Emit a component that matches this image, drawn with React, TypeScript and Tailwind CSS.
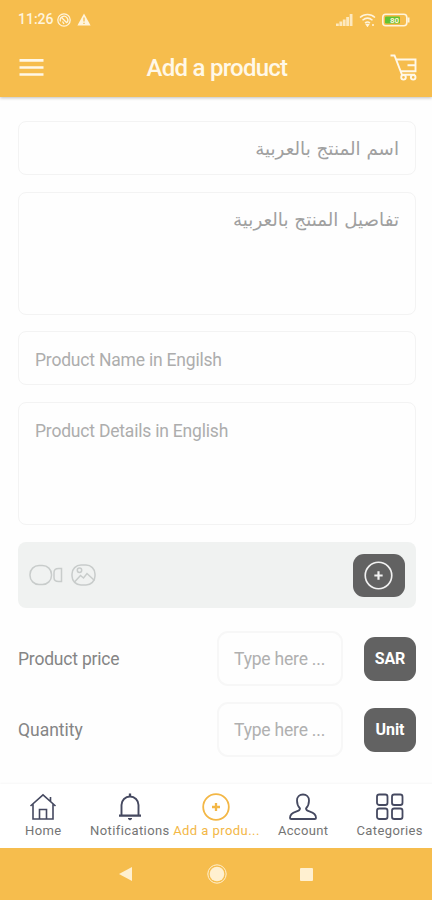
import type { ReactNode } from "react";

type FieldProps = {
  placeholder: string;
  tall?: boolean;
  arabic?: boolean;
  className?: string;
};

function Field({ placeholder, tall, arabic, className = "" }: FieldProps) {
  return (
    <div
      dir={arabic ? "rtl" : "ltr"}
      className={`rounded-lg border border-[#f3f3f3] px-4 leading-[26px] ${tall ? "h-[123px]" : "h-[54px]"} ${arabic ? "pt-[14px] font-['DejaVu_Sans',sans-serif] text-[18.3px] text-[#a0a0a0]" : "pt-[14.5px] text-[17.5px] tracking-[-0.2px] text-[#adadad]"} ${className}`}
    >
      <span className="whitespace-nowrap">{placeholder}</span>
    </div>
  );
}

function ValueRow({ label, unit, className = "" }: { label: string; unit: string; className?: string }) {
  return (
    <div className="flex h-[55px] items-center">
      <span className={`flex-1 pt-px text-[17.5px] text-[#858585] ${className}`}>{label}</span>
      <div className="flex h-[55px] w-[126px] items-center rounded-[11px] border-2 border-[#f7f7f7] pt-px pl-[15px] text-[17.5px] tracking-[-0.2px] text-[#b0b0b0]">
        Type here ...
      </div>
      <div className="ml-[21px] flex h-[44px] w-[52px] items-center justify-center rounded-[11px] bg-[#626262] text-[16px] font-bold tracking-[-0.1px] text-white">
        {unit}
      </div>
    </div>
  );
}

function PlusCircle({ size, width }: { size: number; width: number }) {
  return (
    <svg width={size} height={size} viewBox="0 0 28 28" fill="none" stroke="currentColor" strokeWidth={width}>
      <circle cx="14" cy="14" r="12.8" />
      <path d="M14 10v8M10 14h8" strokeWidth={width + 0.5} />
    </svg>
  );
}

const tabs: { label: string; icon: ReactNode; active?: boolean; spacing: string }[] = [
  {
    label: "Home",
    spacing: "tracking-[0.4px]",
    icon: (
      <svg width="28" height="28" viewBox="0 0 28 28" fill="none" stroke="currentColor" strokeWidth="1.6">
        <path d="M1.5 13 14 1.8 26.5 13M4 11v15h20V11M21.500 8.500V4" />
        <path d="M10.5 26v-9.5h7V26" />
      </svg>
    ),
  },
  {
    label: "Notifications",
    spacing: "tracking-[0.4px]",
    icon: (
      <svg width="28" height="28" viewBox="0 0 28 28" fill="none" stroke="currentColor" strokeWidth="1.9">
        <path d="M5.500 22.500V12a8.500 8.500 0 0 1 17 0v10.500" />
        <path d="M14 .5v3M3 22.600h22" strokeWidth="2.300" />
        <path d="M12 25.500h4l-2 1.500z" fill="currentColor" strokeWidth="1" />
      </svg>
    ),
  },
  {
    label: "Add a produ...",
    active: true,
    spacing: "tracking-[0.45px]",
    icon: <PlusCircle size={28} width={1.8} />,
  },
  {
    label: "Account",
    spacing: "tracking-[0.3px]",
    icon: (
      <svg width="28" height="28" viewBox="0 0 28 28" fill="none" stroke="currentColor" strokeWidth="1.8" strokeLinejoin="round">
        <path d="M11 15.500C9 13.500 8 10.500 8 7.500C8 4 10.500 1.500 14 1.500s6 2.500 6 6c0 3-1 6-3 8c0 2 1.500 2.500 4 3.200c4 1.200 6 3.300 6 6.300q0 1-1.200 1H2.200Q1 26 1 25c0-3 2-5.100 6-6.300c2.500-.7 4-1.200 4-3.200z" />
      </svg>
    ),
  },
  {
    label: "Categories",
    spacing: "tracking-[0.4px]",
    icon: (
      <svg width="28" height="28" viewBox="0 0 28 28" fill="none" stroke="currentColor" strokeWidth="1.8">
        <rect x="1" y="1.500" width="10.500" height="10.500" rx="2.300" />
        <rect x="16" y="1.500" width="10.500" height="10.500" rx="2.300" />
        <rect x="1" y="15.500" width="10.500" height="10.500" rx="2.300" />
        <rect x="16" y="15.500" width="10.500" height="10.500" rx="2.300" />
      </svg>
    ),
  },
];

function StatusBar() {
  return (
    <div className="flex h-[38px] items-center pt-px pl-[18px] pr-[22px] text-[#fff4dc]">
      <span className="w-[39px] text-[14px] font-medium">11:26</span>
      <svg width="14" height="14" viewBox="0 0 14 14" fill="none" stroke="currentColor" strokeWidth="1.3">
        <circle cx="7" cy="7" r="6.200" />
        <path d="M3.500 8.500a3.800 3.800 0 1 1 6.500 1M5 5l5 5M5.500 8.500 7 11" />
      </svg>
      <svg className="ml-[6px]" width="14" height="13" viewBox="0 0 14 13">
        <path d="M7 .5 13.600 12.500H.4z" fill="currentColor" />
        <path d="M7 4.500v4M7 9.800v1.300" stroke="#f6bd4d" strokeWidth="1.300" />
      </svg>
      <svg className="ml-auto" width="17" height="12" viewBox="0 0 17 12" fill="currentColor" opacity=".8">
        <path d="M0 9.500h2.800V12H0zM3.400 7.500h2.800V12H3.400zM6.800 5.500h2.800V12H6.800zM10.200 3H13v9h-2.800zM13.700 0h2.800v12h-2.800z" />
      </svg>
      <svg className="ml-[6px]" width="17" height="14" viewBox="0 0 17 14" fill="none" stroke="currentColor" strokeWidth="1.500">
        <path d="M1 4.500c4.300-4 10.700-4 15 0M3.500 7.300c3-2.600 7-2.600 10 0M6 10c1.500-1.300 3.500-1.300 5 0" />
        <path d="M7.500 11.500h2L8.500 13zM14 11v2" />
      </svg>
      <svg className="ml-[6px]" width="28" height="14" viewBox="0 0 28 14">
        <rect x=".8" y="1.300" width="24" height="11.400" rx="3" fill="none" stroke="currentColor" strokeWidth="1.600" />
        <path d="M25.500 4.500h2v5h-2z" fill="currentColor" />
        <rect x="3" y="3.500" width="15" height="7" rx="1" fill="#62c332" />
        <text x="8" y="10" fontSize="8" fontWeight="700" fill="#fff4dc">80</text>
      </svg>
    </div>
  );
}

export default function App() {
  return (
    <div className="flex h-[900px] w-[432px] flex-col overflow-hidden bg-[#fefefe] font-[Roboto,sans-serif]">
      <header className="z-10 h-[97px] shrink-0 bg-[#f6bd4d] shadow-[0_1px_3px_rgba(0,0,0,0.25)]">
        <StatusBar />
        <div className="flex h-[58px] items-center pl-[19px] pr-[15px] text-[#fff8e8]">
          <svg width="25" height="19" viewBox="0 0 25 19" stroke="currentColor" strokeWidth="2.700">
            <path d="M.5 2.300h24M.5 9.500h24M.5 16.500h24" />
          </svg>
          <h1 className="flex-1 pt-px text-center text-[24px] font-medium tracking-[-0.75px]">Add a product</h1>
          <svg width="27" height="27" viewBox="0 0 27 27" fill="none" stroke="currentColor" strokeWidth="1.900">
            <path d="M.5 1.500h4l7.500 19.300h13M6.500 5.500h19v11.700H11M17.500 11.300h8" />
            <circle cx="13.500" cy="23.300" r="2.300" />
            <circle cx="23.200" cy="23.300" r="2.300" />
          </svg>
        </div>
      </header>

      <main className="flex min-h-0 flex-1 flex-col overflow-hidden pt-[24px] pr-[16px] pl-[18px] [&>*]:shrink-0">
        <Field placeholder="اسم المنتج بالعربية" arabic />
        <Field placeholder="تفاصيل المنتج بالعربية" arabic tall className="mt-[17px]" />
        <Field placeholder="Product Name in Engilsh" className="mt-[16px]" />
        <Field placeholder="Product Details in English" tall className="mt-[17px]" />

        <div className="mt-[17px] flex h-[66px] items-center rounded-lg bg-[#f0f2f1] pr-[11px] pl-[11px] text-[#c8cccb]">
          <svg width="34" height="22" viewBox="0 0 34 22" fill="none" stroke="currentColor" strokeWidth="1.500">
            <rect x="1" y="1.500" width="21.500" height="19" rx="9" />
            <path d="M32.500 4.500v13h-3c-3 0-4.500-2-4.500-4V8.500c0-2 1.500-4 4.500-4z" />
          </svg>
          <svg className="ml-[8px]" width="25" height="22" viewBox="0 0 25 22" fill="none" stroke="currentColor" strokeWidth="1.500">
            <rect x="1" y="1" width="23" height="20" rx="9" />
            <circle cx="8.500" cy="6.300" r="2.200" />
            <path d="m3.500 18 6-6.500 3 2.500L16 9.500l7.500 7" />
          </svg>
          <div className="ml-auto flex h-[43px] w-[52px] items-center justify-center rounded-[11px] bg-[#626262] pr-px text-[#f2f2f2]">
            <PlusCircle size={29} width={1.6} />
          </div>
        </div>

        <div className="mt-[23px] flex flex-col gap-[16px]">
          <ValueRow label="Product price" unit="SAR" className="tracking-[-0.2px]" />
          <ValueRow label="Quantity" unit="Unit" />
        </div>
        <p className="mt-[23px] text-[17px] leading-[20px] text-[#b5b5b5]">Description</p>
      </main>

      <nav className="grid h-[64px] w-[433px] shrink-0 grid-cols-5 bg-white pt-[9px] shadow-[0_-1px_2px_rgba(0,0,0,0.03)]">
        {tabs.map((tab) => (
          <div
            key={tab.label}
            className={`flex min-w-0 flex-col items-center ${tab.active ? "text-[#f3b746]" : "text-[#454960]"}`}
          >
            {tab.icon}
            <span
              className={`text-[13px] leading-[20px] whitespace-nowrap ${tab.spacing} ${tab.active ? "" : "text-[#747474]"}`}
            >
              {tab.label}
            </span>
          </div>
        ))}
      </nav>

      <footer className="flex h-[52px] shrink-0 items-center bg-[#f6bd4d] pl-[119px] text-[#fff0d0]">
        <svg width="13" height="14" viewBox="0 0 13 14" fill="currentColor">
          <path d="M13 0v14L0 7z" />
        </svg>
        <svg className="ml-[75px]" width="20" height="20" viewBox="0 0 20 20" fill="currentColor">
          <circle cx="10" cy="10" r="7.300" />
          <circle cx="10" cy="10" r="9.200" fill="none" stroke="currentColor" strokeWidth="1" />
        </svg>
        <span className="ml-[73px] size-[13px] rounded-[1px] bg-[#fff0d0]" />
      </footer>
    </div>
  );
}
